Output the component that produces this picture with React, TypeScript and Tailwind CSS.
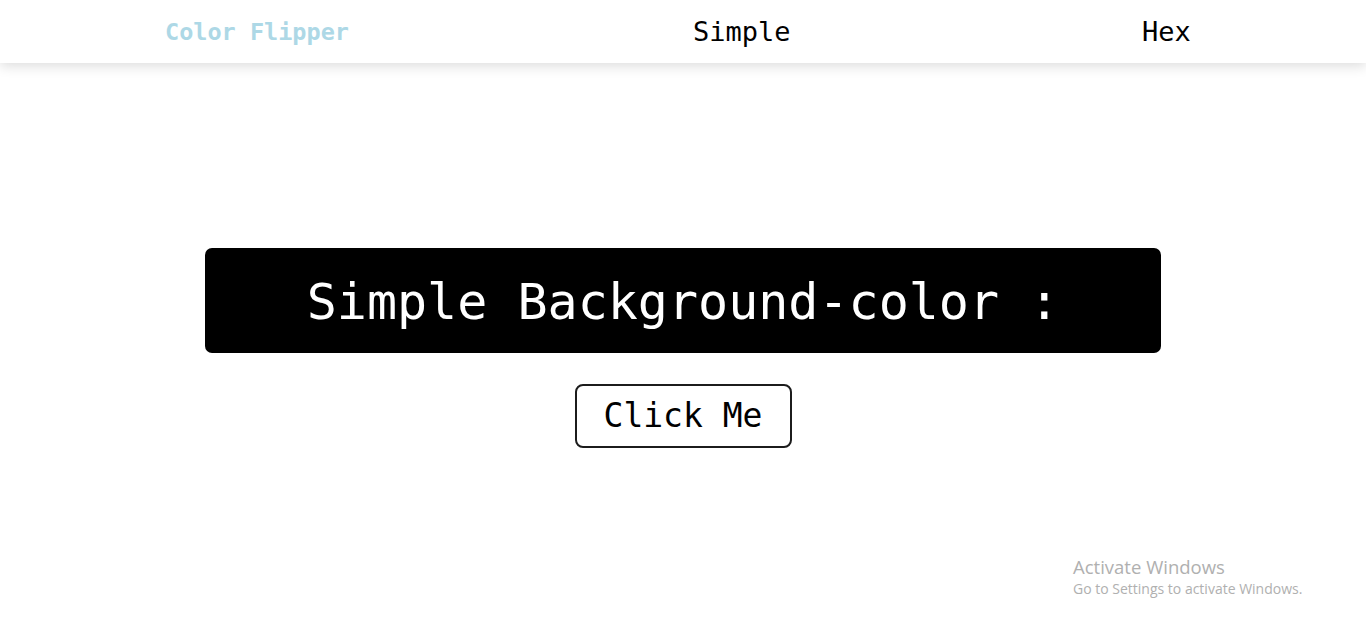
export default function App() {
  return (
    <div className="relative flex h-[633px] w-full flex-col overflow-hidden bg-white font-['DejaVu_Sans_Mono',monospace]">
      {/* Navbar */}
      <nav className="relative z-10 flex h-[63px] shrink-0 items-center bg-white pt-[2px] shadow-[0_3px_12px_rgba(0,0,0,0.14)]">
        <div className="w-[693px] pl-[165px] text-[23.5px] font-bold text-[#add8e6]">
          Color Flipper
        </div>
        <a className="w-[449px] text-[27px] text-black">Simple</a>
        <a className="text-[27px] text-black">Hex</a>
      </nav>

      {/* Main */}
      <main className="flex flex-1 flex-col items-center justify-center gap-[31px]">
        <div className="flex h-[105px] w-[70%] items-center justify-center rounded-[7px] bg-black">
          <h1 className="pt-[2px] text-[50px] leading-none text-white">Simple Background-color :</h1>
        </div>
        <button className="h-[64px] w-[217px] rounded-[8px] border-2 border-[#1c1c1c] bg-white text-[33px] text-black">
          Click Me
        </button>
      </main>

      {/* Windows watermark */}
      <div className="pointer-events-none absolute left-[1073px] top-[555px] font-['Open_Sans',sans-serif] text-[#b0b0b0]">
        <div className="text-[18.5px] leading-[24px]">Activate Windows</div>
        <div className="text-[14px] leading-[20px]">Go to Settings to activate Windows.</div>
      </div>
    </div>
  );
}
